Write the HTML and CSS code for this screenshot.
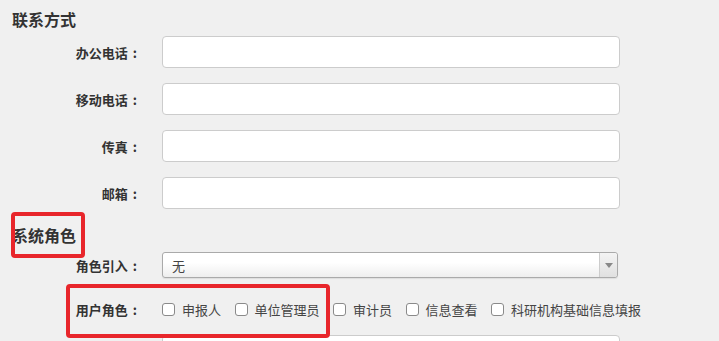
FILE: index.html
```html
<!DOCTYPE html>
<html>
  <head>
    <title>用户信息</title>
    <link rel="stylesheet" href="styles.css">
  </head>
  <body>
    <div class="page">
      <h3 class="section-title">联系方式</h3>
      <div class="form-row">
        <label class="form-label">办公电话<span class="colon">:</span></label>
        <input class="form-input" type="text" />
      </div>
      <div class="form-row">
        <label class="form-label">移动电话<span class="colon">:</span></label>
        <input class="form-input" type="text" />
      </div>
      <div class="form-row">
        <label class="form-label">传真<span class="colon">:</span></label>
        <input class="form-input" type="text" />
      </div>
      <div class="form-row">
        <label class="form-label">邮箱<span class="colon">:</span></label>
        <input class="form-input" type="text" />
      </div>

      <h3 class="section-title section-title-2 mark-title">系统角色</h3>
      <div class="form-row select-row">
        <label class="form-label">角色引入<span class="colon">:</span></label>
        <div class="select-box">
          <span class="select-value">无</span>
          <span class="select-arrow"></span>
        </div>
      </div>
      <div class="form-row roles-row mark-roles">
        <label class="form-label">用户角色<span class="colon">:</span></label>
        <div class="role-list">
          <label class="role"><input type="checkbox" />申报人</label>
          <label class="role"><input type="checkbox" />单位管理员</label>
          <label class="role"><input type="checkbox" />审计员</label>
          <label class="role"><input type="checkbox" />信息查看</label>
          <label class="role"><input type="checkbox" />科研机构基础信息填报</label>
        </div>
      </div>
      <div class="form-row next-row">
        <label class="form-label"></label>
        <input class="form-input" type="text" />
      </div>
    </div>
  </body>
</html>
```

FILE: styles.css
```css
body {
  margin: 0;
  background: #f0f0f0;
  font-family: "Noto Sans CJK SC", "Liberation Sans", sans-serif;
  color: #333;
  overflow: hidden;
}

.page {
  padding: 9px 12px 0;
}

.section-title {
  margin: 0;
  font-size: 16px;
  line-height: 20px;
  font-weight: bold;
  color: #333;
}

.section-title-2 {
  margin-top: 16px;
}

.form-row {
  display: flex;
  align-items: center;
  height: 32px;
  margin-top: 15px;
}

.section-title + .form-row {
  margin-top: 7px;
}

.form-label {
  width: 129px;
  flex-shrink: 0;
  text-align: right;
  font-size: 13px;
  font-weight: bold;
  color: #333;
}

.colon {
  margin: 0 4px 0 5px;
}

.form-input {
  box-sizing: border-box;
  width: 458px;
  height: 32px;
  margin: 0 0 0 21px;
  padding: 0 8px;
  border: 1px solid #ccc;
  border-radius: 4px;
  background: #fff;
  outline: none;
}

.select-row {
  height: 26px;
  margin-top: 10px;
}

.select-box {
  box-sizing: border-box;
  display: flex;
  align-items: center;
  width: 456px;
  height: 26px;
  margin-left: 21px;
  border: 1px solid #aaa;
  border-radius: 3px;
  background: linear-gradient(#fff 40%, #eee);
  box-shadow: 0 1px 1px rgba(0, 0, 0, 0.08);
}

.select-value {
  flex-grow: 1;
  padding-left: 9px;
  font-size: 13px;
  color: #444;
}

.select-arrow {
  position: relative;
  width: 17px;
  height: 100%;
  border-left: 1px solid #ccc;
  background: linear-gradient(#f4f4f4, #e0e0e0);
  border-radius: 0 3px 3px 0;
}

.select-arrow::before {
  content: "";
  position: absolute;
  left: 5px;
  top: 10px;
  border-left: 4px solid transparent;
  border-right: 4px solid transparent;
  border-top: 5px solid #888;
}

.roles-row {
  margin-top: 15px;
}

.role-list {
  display: flex;
  align-items: center;
  margin-left: 21px;
}

.role {
  display: flex;
  align-items: center;
  margin-right: 13.5px;
  font-size: 13px;
  color: #444;
  white-space: nowrap;
}

.role input {
  appearance: none;
  box-sizing: border-box;
  width: 13px;
  height: 13px;
  margin: 1px 7px 0 0;
  border: 1px solid #8a8a8a;
  border-radius: 3px;
  background: #fff;
}

.next-row {
  margin-top: 10px;
}

/* red annotation boxes */
.mark-title,
.mark-roles {
  position: relative;
}

.mark-title::after,
.mark-roles::after {
  content: "";
  position: absolute;
  box-sizing: border-box;
  border: 4px solid #e8262b;
  border-radius: 4px;
  pointer-events: none;
}

.mark-title::after {
  left: -1px;
  top: -13px;
  width: 74px;
  height: 46px;
}

.mark-roles::after {
  left: 54px;
  top: -9px;
  width: 264px;
  height: 54px;
  z-index: 1;
}
```
